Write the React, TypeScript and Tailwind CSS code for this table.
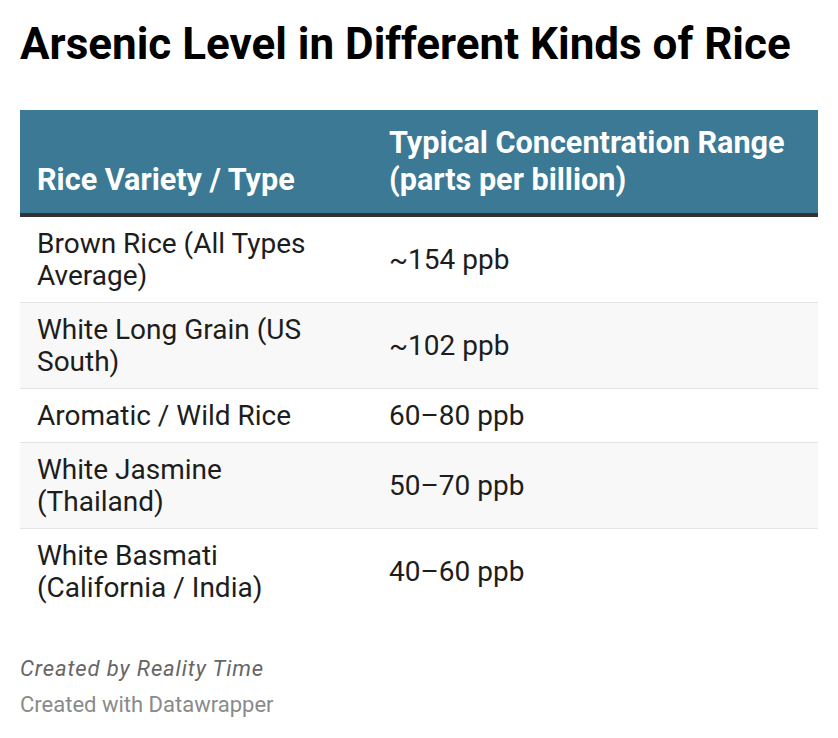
import React from "react";

const rows: { name: string; value: string }[] = [
  { name: "Brown Rice (All Types Average)", value: "~154 ppb" },
  { name: "White Long Grain (US South)", value: "~102 ppb" },
  { name: "Aromatic / Wild Rice", value: "60–80 ppb" },
  { name: "White Jasmine (Thailand)", value: "50–70 ppb" },
  { name: "White Basmati (California / India)", value: "40–60 ppb" },
];

export default function App() {
  return (
    <div
      className="w-[838px] h-[738px] bg-white px-[20px] pt-[18px]"
      style={{ fontFamily: "Roboto, 'Liberation Sans', sans-serif" }}
    >
      <h1 className="text-[44px] leading-[52px] font-bold text-[#000000]">
        Arsenic Level in Different Kinds of Rice
      </h1>
      <div className="mt-[40px] w-[798px]">
        <div className="grid grid-cols-[352px_1fr] bg-[#3b7995] border-b-[4px] border-[#333333] text-white font-bold text-[30.6px] leading-[37px]">
          <div className="flex items-end pl-[17px] pr-[40px] pt-[14px] pb-[15px]">Rice Variety / Type</div>
          <div className="flex items-end px-[17px] pt-[14px] pb-[15px]">
            Typical Concentration Range (parts per billion)
          </div>
        </div>
        {rows.map((r, i) => (
          <div
            key={r.name}
            className={
              "grid grid-cols-[352px_1fr] text-[28px] leading-[32px] text-[#1d1d1d] " +
              (i % 2 === 1 ? "bg-[#f8f8f8] " : "bg-white ") +
              (i < rows.length - 1 ? "border-b border-[#e4e4e4]" : "")
            }
          >
            <div className="pl-[17px] pr-[40px] pt-[11px] pb-[10px]">{r.name}</div>
            <div className="flex items-center px-[17px] pt-[11px] pb-[10px]">{r.value}</div>
          </div>
        ))}
      </div>
      <div className="mt-[40px] text-[22px] leading-[29px] italic tracking-[0.9px] text-[#666666]">
        Created by Reality Time
      </div>
      <div className="mt-[7px] text-[22px] leading-[29px] text-[#8a8a8a]">Created with Datawrapper</div>
    </div>
  );
}
